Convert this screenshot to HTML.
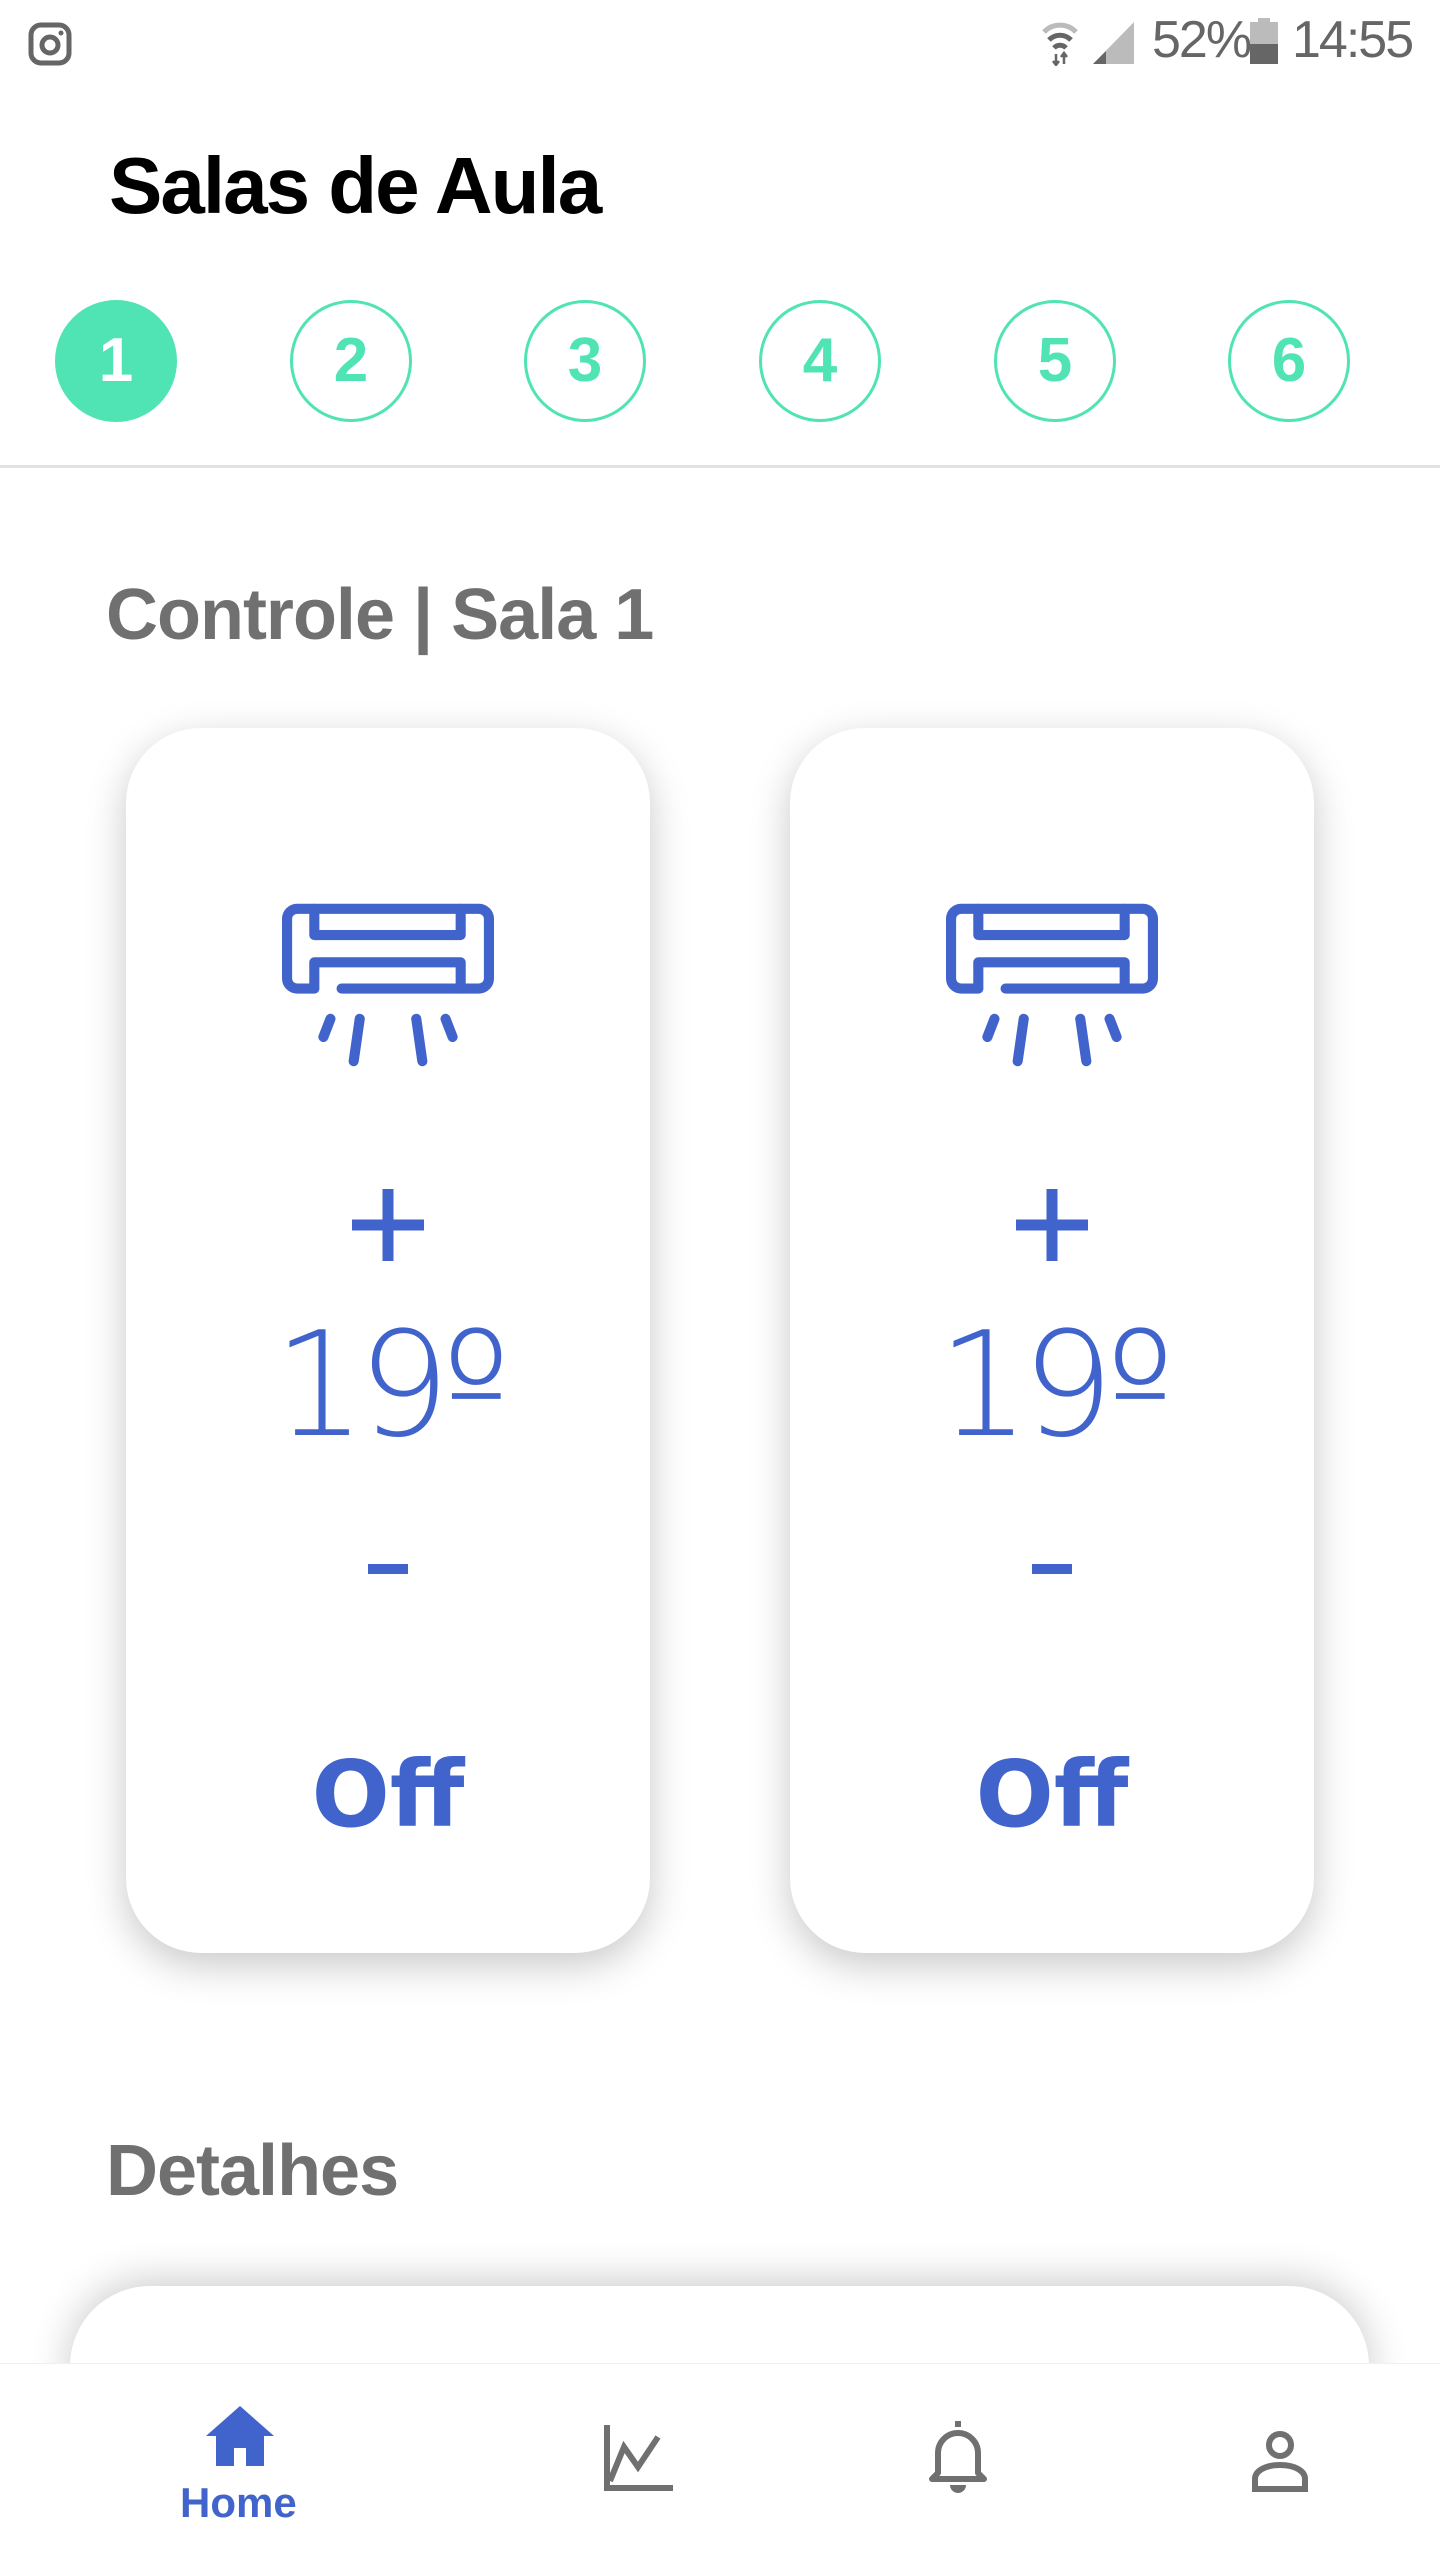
<!DOCTYPE html>
<html><head><meta charset="utf-8"><style>
*{margin:0;padding:0;box-sizing:border-box}
body{width:1440px;height:2560px;background:#fff;position:relative;overflow:hidden;font-family:"Liberation Sans",sans-serif}
.abs{position:absolute}
.circ{position:absolute;top:300px;width:122px;height:122px;border-radius:50%;border:3px solid #50e3b4;color:#50e3b4;font-size:62px;font-weight:bold;line-height:116px;text-align:center;font-family:"Liberation Sans",sans-serif}
.card{position:absolute;top:728px;width:524px;height:1225px;background:#fff;border-radius:75px;box-shadow:0 12px 40px rgba(0,0,0,0.22)}
.card .t{position:absolute;left:0;width:100%;text-align:center;color:#4163cc;font-family:"DejaVu Sans",sans-serif}
</style></head><body>
<svg class="abs" style="left:28px;top:22px" width="44" height="44" viewBox="0 0 44 44"><rect x="3" y="3" width="38" height="38" rx="10" fill="none" stroke="#666" stroke-width="5"/><circle cx="22" cy="23" r="8" fill="none" stroke="#666" stroke-width="5"/><circle cx="33" cy="11" r="2.5" fill="#666"/></svg>
<svg class="abs" style="left:1040px;top:18px" width="100" height="48" viewBox="0 0 100 48"><path d="M4 14 A22 22 0 0 1 36 14" stroke="#bbb" stroke-width="5" fill="none"/><path d="M9 22 A15 15 0 0 1 31 22" stroke="#666" stroke-width="5" fill="none"/><path d="M14 30 A8 8 0 0 1 26 30" stroke="#666" stroke-width="5" fill="none"/><path d="M16 36v10M13 43l3 4 3-4M24 46v-10M21 39l3-4 3 4" stroke="#666" stroke-width="2.5" fill="none"/><polygon points="53,46 94,4 94,46" fill="#bbb"/><polygon points="53,46 66,33 66,46" fill="#666"/></svg>
<div class="abs" style="left:1152px;top:10px;font-size:52px;color:#666;letter-spacing:-2px">52%</div>
<svg class="abs" style="left:1250px;top:18px" width="28" height="46" viewBox="0 0 28 46"><rect x="8" y="0" width="12" height="5" fill="#bbb"/><rect x="0" y="4" width="28" height="42" fill="#bbb"/><rect x="0" y="26" width="28" height="20" fill="#666"/></svg>
<div class="abs" style="left:1292px;top:10px;font-size:52px;color:#666;letter-spacing:-2px">14:55</div>
<div class="abs" style="left:109px;top:140px;font-size:80px;font-weight:bold;color:#000;letter-spacing:-2px">Salas de Aula</div>
<div class="circ" style="left:55px;background:#50e3b4;color:#fff">1</div>
<div class="circ" style="left:290px">2</div>
<div class="circ" style="left:524px">3</div>
<div class="circ" style="left:759px">4</div>
<div class="circ" style="left:994px">5</div>
<div class="circ" style="left:1228px">6</div>
<div class="abs" style="left:0;top:465px;width:1440px;height:3px;background:#e2e2e2"></div>
<div class="abs" style="left:106px;top:574px;font-size:72px;font-weight:bold;color:#707070;letter-spacing:-1px">Controle | Sala 1</div>

<div class="card" style="left:126px">
 <svg class="abs" style="left:155px;top:173px" width="214" height="168" viewBox="0 0 212 165"><g stroke="#4163cc" stroke-width="10" fill="none" stroke-linecap="round" stroke-linejoin="round"><path d="M33 86H16a10 10 0 0 1-10-10V17A10 10 0 0 1 16 7h180a10 10 0 0 1 10 10v59a10 10 0 0 1-10 10H60"/><path d="M33 7v26h145V7"/><path d="M33 86V60h145v26"/><path d="M49 116l-7 18M78 116l-6 42M134 116l6 42M163 116l7 18"/></g></svg>
 <svg class="abs" style="left:226px;top:461px" width="72" height="72" viewBox="0 0 72 72"><path d="M36 0v72M0 36h72" stroke="#4163cc" stroke-width="11"/></svg>
 <div class="t" style="top:573px;font-size:145px;font-weight:200;letter-spacing:-8px">19º</div>
 <div class="abs" style="left:242px;top:836px;width:40px;height:10px;background:#4163cc"></div>
 <div class="t" style="top:1013px;font-size:92px;font-weight:bold">Off</div>
</div>
<div class="card" style="left:790px">
 <svg class="abs" style="left:155px;top:173px" width="214" height="168" viewBox="0 0 212 165"><g stroke="#4163cc" stroke-width="10" fill="none" stroke-linecap="round" stroke-linejoin="round"><path d="M33 86H16a10 10 0 0 1-10-10V17A10 10 0 0 1 16 7h180a10 10 0 0 1 10 10v59a10 10 0 0 1-10 10H60"/><path d="M33 7v26h145V7"/><path d="M33 86V60h145v26"/><path d="M49 116l-7 18M78 116l-6 42M134 116l6 42M163 116l7 18"/></g></svg>
 <svg class="abs" style="left:226px;top:461px" width="72" height="72" viewBox="0 0 72 72"><path d="M36 0v72M0 36h72" stroke="#4163cc" stroke-width="11"/></svg>
 <div class="t" style="top:573px;font-size:145px;font-weight:200;letter-spacing:-8px">19º</div>
 <div class="abs" style="left:242px;top:836px;width:40px;height:10px;background:#4163cc"></div>
 <div class="t" style="top:1013px;font-size:92px;font-weight:bold">Off</div>
</div>
<div class="abs" style="left:106px;top:2130px;font-size:72px;font-weight:bold;color:#707070;letter-spacing:-1px">Detalhes</div>
<div class="abs" style="left:70px;top:2286px;width:1299px;height:200px;background:#fff;border-radius:80px 80px 0 0;box-shadow:0 -6px 40px rgba(0,0,0,0.2)"></div>

<div class="abs" style="left:0;top:2363px;width:1440px;height:197px;background:#fff;z-index:5;border-top:1px solid #f0f0f0">
<svg class="abs" style="left:204px;top:40px" width="72" height="64" viewBox="0 0 72 64"><path d="M36 2L2 32h10v30h18V44h12v18h18V32h10z" fill="#4163cc"/></svg>
<div class="abs" style="left:180px;top:115px;font-size:42px;font-weight:bold;color:#4163cc">Home</div>
<svg class="abs" style="left:604px;top:61px" width="72" height="66" viewBox="0 0 72 66"><path d="M3 0v63h66" stroke="#707070" stroke-width="6" fill="none"/><path d="M6 56l14-34 14 20 20-30" stroke="#707070" stroke-width="6" fill="none"/></svg>
<svg class="abs" style="left:926px;top:53px" width="64" height="76" viewBox="0 0 64 76"><path d="M32 4v6M12 56V36a20 20 0 0 1 40 0v20l6 6H6z" stroke="#707070" stroke-width="6" fill="none" stroke-linejoin="round"/><path d="M24 68a8 8 0 0 0 16 0z" fill="#707070"/></svg>
<svg class="abs" style="left:1250px;top:65px" width="60" height="64" viewBox="0 0 60 64"><circle cx="30" cy="16" r="11" stroke="#707070" stroke-width="6" fill="none"/><path d="M5 60V50c0-8 10-14 25-14s25 6 25 14v10z" stroke="#707070" stroke-width="6" fill="none"/></svg>
</div>
</body></html>
